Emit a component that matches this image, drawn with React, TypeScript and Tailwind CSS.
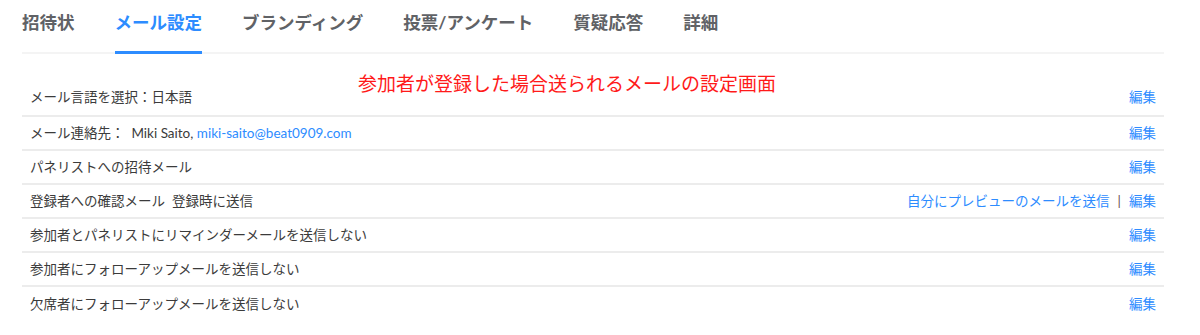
import React from 'react';

const tabs = ['招待状', 'メール設定', 'ブランディング', '投票/アンケート', '質疑応答', '詳細'];

const Edit: React.FC = () => (
  <a className="text-[#2d8cff] cursor-pointer">編集</a>
);

const Row: React.FC<{ children: React.ReactNode; right?: React.ReactNode }> = ({ children, right }) => (
  <div className="h-[34px] flex items-center justify-between px-[8px] pb-[1px] border-b-2 border-[#ececec]">
    <div className="text-[#3b3b3b]">{children}</div>
    <div className="flex items-center">{right ?? <Edit />}</div>
  </div>
);

export default function App() {
  return (
    <div
      className="w-[1200px] h-[335px] bg-white overflow-hidden"
      style={{ fontFamily: 'Lato, "Noto Sans CJK JP", sans-serif' }}
    >
      <div className="ml-[22px] w-[1142px] relative">
        {/* tabs */}
        <nav className="h-[54px] flex gap-[40px] border-b-2 border-[#f4f4f4]">
          {tabs.map((t, i) => (
            <div
              key={t}
              className={
                'pt-[10px] text-[17.5px] leading-[26px] font-bold ' +
                (i === 1
                  ? 'text-[#2d8cff] border-b-[3px] border-[#2d8cff] -mb-[2px]'
                  : 'text-[#606266]')
              }
            >
              {t}
            </div>
          ))}
        </nav>

        <p className="absolute left-[336px] top-[72px] text-[19px] leading-[24px] text-[#ff1a1a]">
          参加者が登録した場合送られるメールの設定画面
        </p>

        <div className="text-[13.5px] leading-[20px]">
          <div className="h-[63px] flex items-end justify-between px-[8px] pb-[8px] border-b-2 border-[#ececec]">
            <div className="text-[#3b3b3b]">メール言語を選択：日本語</div>
            <Edit />
          </div>
          <Row>
            メール連絡先：&nbsp; Miki Saito, <a className="text-[#2d8cff]">miki-saito@beat0909.com</a>
          </Row>
          <Row>パネリストへの招待メール</Row>
          <Row
            right={
              <>
                <a className="text-[#2d8cff]">自分にプレビューのメールを送信</a>
                <span className="mx-[8px] text-[#6b4a4a]">|</span>
                <Edit />
              </>
            }
          >
            登録者への確認メール&nbsp;&nbsp;登録時に送信
          </Row>
          <Row>参加者とパネリストにリマインダーメールを送信しない</Row>
          <Row>参加者にフォローアップメールを送信しない</Row>
          <div className="h-[34px] flex items-center justify-between px-[8px] pb-[1px]">
            <div className="text-[#3b3b3b]">欠席者にフォローアップメールを送信しない</div>
            <Edit />
          </div>
        </div>
      </div>
    </div>
  );
}
